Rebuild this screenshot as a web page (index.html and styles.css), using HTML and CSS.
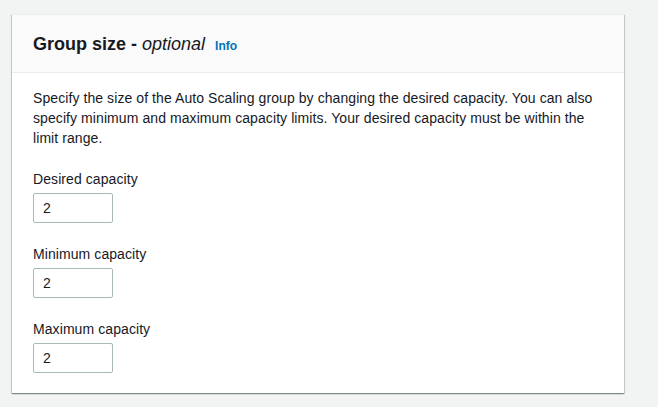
FILE: index.html
```html
<!DOCTYPE html>
<html lang="en">
<head>
<meta charset="utf-8">
<title>Group size</title>
<link rel="stylesheet" href="styles.css">
</head>
<body>
<div class="page">
  <section class="card">
    <header class="card-header">
      <h2 class="title">Group size - <em>optional</em></h2>
      <a class="info" href="#">Info</a>
    </header>
    <div class="card-body">
      <p class="desc">Specify the size of the Auto Scaling group by changing the desired capacity. You can also specify minimum and maximum capacity limits. Your desired capacity must be within the limit range.</p>
      <div class="field">
        <label class="label" for="desired">Desired capacity</label>
        <input class="input" id="desired" type="text" value="2">
      </div>
      <div class="field">
        <label class="label" for="min">Minimum capacity</label>
        <input class="input" id="min" type="text" value="2">
      </div>
      <div class="field">
        <label class="label" for="max">Maximum capacity</label>
        <input class="input" id="max" type="text" value="2">
      </div>
    </div>
  </section>
</div>
</body>
</html>
```
FILE: styles.css
```css
html, body {
  margin: 0;
  padding: 0;
  background: #f2f3f3;
  font-family: "Liberation Sans", Arial, sans-serif;
  color: #16191f;
  font-size: 14px;
  line-height: 20px;
}
.page {
  box-sizing: border-box;
  min-height: 407px;
  padding: 14px 0 14px 12px;
}
.card {
  width: 612px;
  background: #fff;
  border-top: 1px solid #eaeded;
  box-shadow: 0 1px 1px 0 rgba(0, 28, 36, 0.3), 1px 1px 1px 0 rgba(0, 28, 36, 0.15), -1px 1px 1px 0 rgba(0, 28, 36, 0.15);
}
.card-header {
  display: flex;
  align-items: baseline;
  gap: 10px;
  height: 22px;
  background: #fafafa;
  border-bottom: 1px solid #eaeded;
  padding: 18px 21px 17px;
}
.title {
  margin: 0;
  font-size: 18px;
  line-height: 22px;
  font-weight: 700;
}
.title em {
  font-style: italic;
  font-weight: 400;
}
.info {
  font-size: 12px;
  line-height: 14px;
  font-weight: 700;
  color: #0073bb;
  text-decoration: none;
}
.card-body {
  padding: 15px 21px 20px;
  letter-spacing: 0.08px;
}
.desc {
  margin: 0 0 21px;
}
.field {
  display: flex;
  flex-direction: column;
  align-items: flex-start;
  gap: 4px;
}
.field + .field {
  margin-top: 21px;
}
.label {
  display: block;
}
.input {
  box-sizing: border-box;
  width: 80px;
  height: 30px;
  border: 1px solid #aab7b8;
  border-radius: 2px;
  padding: 0 9px;
  font: inherit;
  color: #16191f;
  background: #fff;
  margin: 0;
}
```
